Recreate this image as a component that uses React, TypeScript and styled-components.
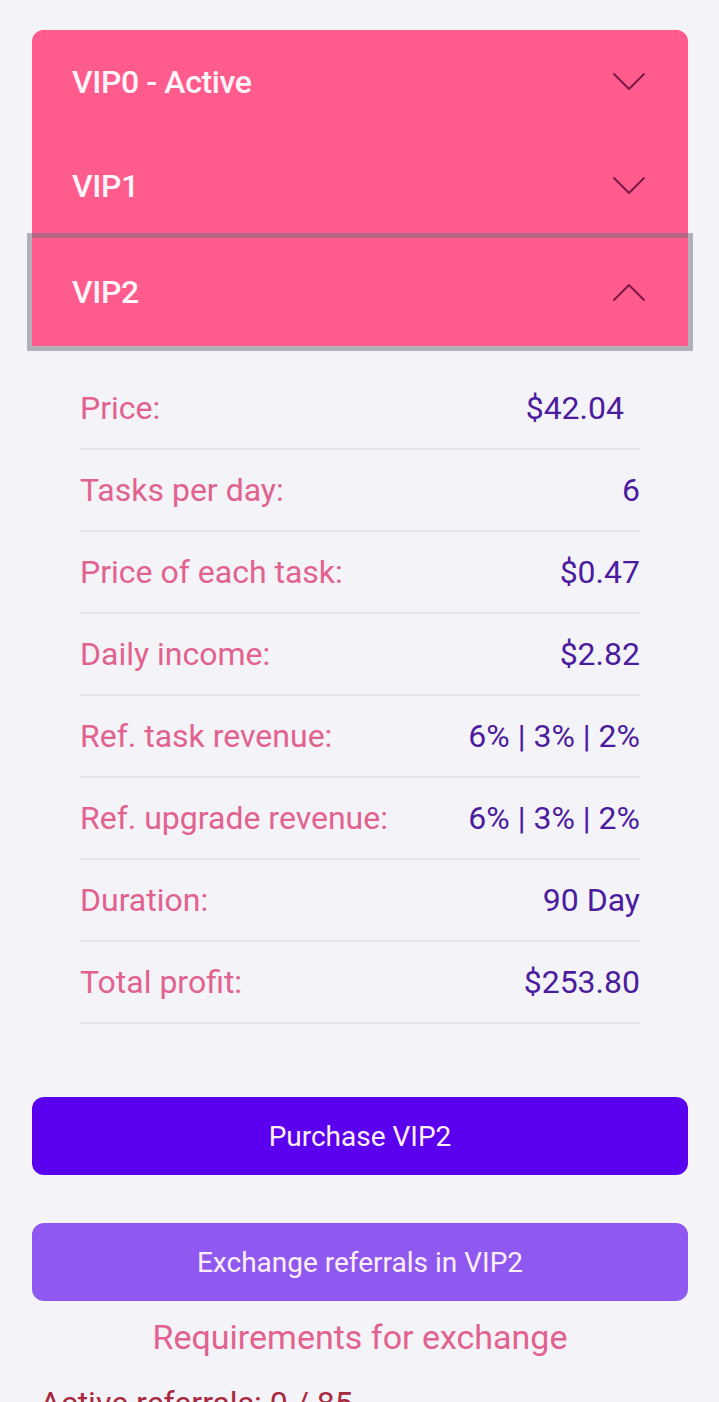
import React, { useState } from 'react'
import styled, { createGlobalStyle } from 'styled-components'

const GlobalStyle = createGlobalStyle`
  html, body {
    margin: 0;
    padding: 0;
    background: #f3f3f8;
    font-family: Roboto, "Noto Sans", Arial, sans-serif;
  }
  * {
    box-sizing: border-box;
  }
`

const levels = ['VIP0 - Active', 'VIP1', 'VIP2']

const details = [
  { label: 'Price:', value: '$42.04', inset: true },
  { label: 'Tasks per day:', value: '6' },
  { label: 'Price of each task:', value: '$0.47' },
  { label: 'Daily income:', value: '$2.82' },
  { label: 'Ref. task revenue:', value: '6% | 3% | 2%' },
  { label: 'Ref. upgrade revenue:', value: '6% | 3% | 2%' },
  { label: 'Duration:', value: '90 Day' },
  { label: 'Total profit:', value: '$253.80' }
]

const Chevron: React.FC<{ up?: boolean }> = ({ up }) => (
  <svg width="34" height="20" viewBox="0 0 34 20" fill="none">
    <path
      d={up ? 'M2 18 L17 3 L32 18' : 'M2 2 L17 17 L32 2'}
      stroke="#7c1846"
      strokeWidth="2"
      strokeLinecap="round"
      strokeLinejoin="round"
    />
  </svg>
)

const App: React.FC = () => {
  const [open, setOpen] = useState(2)

  return (
    <Page>
      <GlobalStyle />
      <Accordion>
        {levels.map((name, i) => (
          <Header key={name} $focused={i === open} onClick={() => setOpen(i)}>
            <HeaderTitle>{name}</HeaderTitle>
            <Chevron up={i === open} />
          </Header>
        ))}
      </Accordion>
      <DetailList>
        {details.map((item) => (
          <DetailRow key={item.label}>
            <Label>{item.label}</Label>
            <Value $inset={item.inset}>{item.value}</Value>
          </DetailRow>
        ))}
      </DetailList>
      <Actions>
        <ActionButton $variant="primary">Purchase VIP2</ActionButton>
        <ActionButton $variant="secondary">Exchange referrals in VIP2</ActionButton>
      </Actions>
      <Requirements>Requirements for exchange</Requirements>
      <Referrals>Active referrals: 0 / 85</Referrals>
    </Page>
  )
}

const Page = styled.div`
  display: flex;
  flex-direction: column;
  padding: 30px 31px 40px 32px;
  min-height: 1402px;
`

const Accordion = styled.div`
  display: flex;
  flex-direction: column;
  border-radius: 12px 12px 0 0;
  background: #ff5b8c;
`

const Header = styled.div<{ $focused?: boolean }>`
  position: relative;
  display: flex;
  align-items: center;
  justify-content: space-between;
  height: ${(p) => (p.$focused ? 108 : 104)}px;
  padding: 0 42px 0 40px;
  color: #fff4f8;
  cursor: pointer;
  background: #ff5b8c;
  box-shadow: ${(p) => (p.$focused ? '0 0 0 5px rgba(110, 110, 120, 0.5)' : 'none')};
  z-index: ${(p) => (p.$focused ? 1 : 0)};
  &:first-child {
    border-radius: 12px 12px 0 0;
  }
`

const HeaderTitle = styled.span`
  font-size: 32px;
  font-weight: 500;
  letter-spacing: -0.4px;
`

const DetailList = styled.div`
  display: flex;
  flex-direction: column;
  padding: 22px 48px 0 48px;
`

const DetailRow = styled.div`
  display: flex;
  align-items: center;
  justify-content: space-between;
  height: 82px;
  border-bottom: 2px solid #e6e6ec;
`

const Label = styled.span`
  font-size: 32px;
  color: #e2628f;
`

const Value = styled.span<{ $inset?: boolean }>`
  font-size: 32px;
  color: #4c1c9e;
  margin-right: ${(p) => (p.$inset ? 16 : 0)}px;
`

const Actions = styled.div`
  display: flex;
  flex-direction: column;
  gap: 48px;
  margin-top: 73px;
`

const ActionButton = styled.button<{ $variant: 'primary' | 'secondary' }>`
  height: 78px;
  border: none;
  border-radius: 12px;
  font-family: Roboto, Arial, sans-serif;
  font-size: 28px;
  color: #fff0f8;
  background: ${(p) => (p.$variant === 'primary' ? '#5a00ef' : '#8f58f1')};
  cursor: pointer;
`

const Requirements = styled.div`
  margin-top: 16px;
  text-align: center;
  font-size: 34px;
  color: #e2628f;
`

const Referrals = styled.div`
  margin-top: 27px;
  margin-left: 8px;
  font-size: 32px;
  color: #a8283f;
`

export default App
